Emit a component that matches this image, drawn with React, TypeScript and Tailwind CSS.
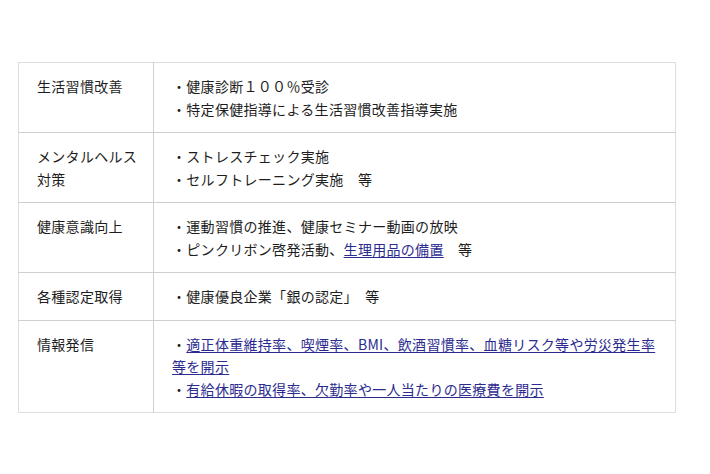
const rows: { label: string; lines: React.ReactNode[] }[] = [
  {
    label: '生活習慣改善',
    lines: ['・健康診断１００％受診', '・特定保健指導による生活習慣改善指導実施'],
  },
  {
    label: 'メンタルヘルス対策',
    lines: ['・ストレスチェック実施', '・セルフトレーニング実施　等'],
  },
  {
    label: '健康意識向上',
    lines: [
      '・運動習慣の推進、健康セミナー動画の放映',
      <>
        ・ピンクリボン啓発活動、<a href="#" className="text-[#2b2b8f] underline underline-offset-2">生理用品の備置</a>　等
      </>,
    ],
  },
  {
    label: '各種認定取得',
    lines: ['・健康優良企業「銀の認定」　等'],
  },
  {
    label: '情報発信',
    lines: [
      <>
        ・<a href="#" className="text-[#2b2b8f] underline underline-offset-2">適正体重維持率、喫煙率、BMI、飲酒習慣率、血糖リスク等や労災発生率等を開示</a>
      </>,
      <>
        ・<a href="#" className="text-[#2b2b8f] underline underline-offset-2">有給休暇の取得率、欠勤率や一人当たりの医療費を開示</a>
      </>,
    ],
  },
];

export default function App() {
  return (
    <div
      className="min-h-[474px] w-[710px] bg-white pt-[62px] pl-[18px] text-[14px] leading-[22.5px] tracking-[0.3px] text-[#1e1e1e]"
      style={{ fontFamily: '"Noto Sans CJK JP", "Noto Sans", sans-serif' }}
    >
      <table className="w-[658px] border-collapse border border-[#dedede]">
        <tbody>
          {rows.map((row) => (
            <tr key={row.label} className="border-t border-[#cfcfcf] first:border-t-0">
              <td className="w-[135px] border-r border-[#cfcfcf] py-3 pl-[18px] pr-[10px] align-top">
                {row.label}
              </td>
              <td className="py-3 pl-[18px] pr-[14px] align-top">
                {row.lines.map((line, i) => (
                  <div key={i}>{line}</div>
                ))}
              </td>
            </tr>
          ))}
        </tbody>
      </table>
    </div>
  );
}
